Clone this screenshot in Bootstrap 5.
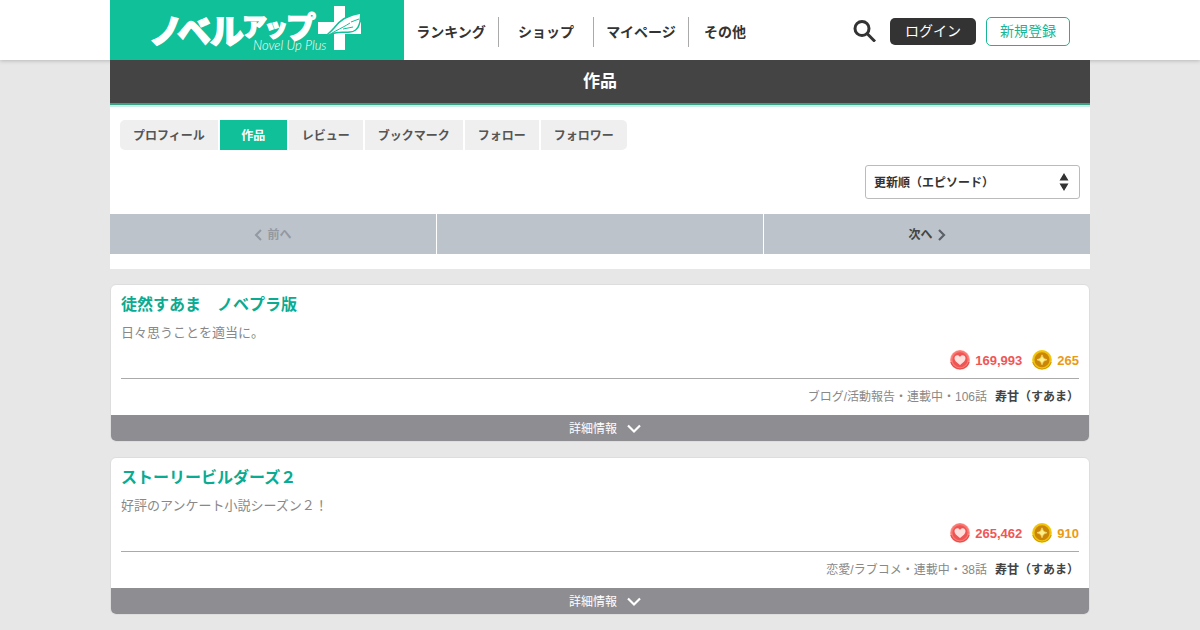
<!DOCTYPE html>
<html lang="ja">
<head>
<meta charset="utf-8">
<meta name="viewport" content="width=device-width, initial-scale=1">
<title>作品 | ノベルアップ＋</title>
<link href="https://cdn.jsdelivr.net/npm/bootstrap@5.3.0/dist/css/bootstrap.min.css" rel="stylesheet">
<style>
:root { --teal: #10c098; --ink: #333; }
body { background: #e7e7e7; color: var(--ink); font-family: "Liberation Sans", "Noto Sans CJK JP", sans-serif; font-size: 12px; line-height: 20px; }
a { text-decoration: none; }
.wrap { max-width: 980px; margin: 0 auto; }
.site-header { box-shadow: 0 1px 4px rgba(0,0,0,.2); }
.brand { flex: 0 0 30%; height: 60px; background: var(--teal); }
.brand svg { width: 294px; max-width: 100%; height: 60px; }
.global-link { width: 95px; line-height: 30px; font-size: 14px; font-weight: 700; color: var(--ink); text-align: center; border-right: 1px solid #aaa; }
.global-link:last-child { width: 72px; border-right: 0; }
.account { padding: 2px 20px 0 0; gap: 10px; }
.btn-login, .btn-join { font-size: 14px; line-height: 27px; padding: 0 13px; border-radius: 5px; }
.btn-login { background: var(--ink); color: #fff; padding: 0 15px; border: 0; }
.btn-join { border: 1px solid #1bb595; color: #1bb595; background: #fff; }
.page-title { background: #444; color: #fff; font-size: 17px; font-weight: 700; line-height: 43px; border-bottom: 2px solid #3ba488; box-shadow: 0 2px 0 #c6f0e5; }
.tabs { gap: 2px; padding: 15px 10px 0; }
.tabs a { background: #efefef; color: #555; font-weight: 700; height: 30px; line-height: 32px; padding: 0 13px; }
.tabs a.active { background: var(--teal); color: #fff; width: 67px; padding: 0; text-align: center; }
.tabs a:first-child { border-radius: 5px 0 0 5px; }
.tabs a:last-child { border-radius: 0 5px 5px 0; }
.sort-box { padding: 15px 10px; }
.sort-box select { width: 215px; height: 34px; padding: 1px 8px 0; font-size: 12px; font-weight: 700; color: var(--ink); border: 1px solid #bbb; border-radius: 3px; background-size: 10px 20px; background-position: right 10px center;
 background-image: url("data:image/svg+xml,%3Csvg xmlns='http://www.w3.org/2000/svg' viewBox='0 0 10 20'%3E%3Cpath d='M.5 8.500 5 1l4.500 7.500ZM.5 11.500h9L5 19Z' fill='%23333'/%3E%3C/svg%3E"); }
.pager { gap: 1px; }
.pager > * { flex: 1; height: 40px; background: #bcc3cb; color: #444; font-weight: 700; gap: 5px; padding-top: 1px; }
.pager .off { color: #9399a1; }
.work { border: 1px solid #ddd; border-radius: 6px; background: #fff; margin: 0 0 15px; overflow: hidden; }
.work-body { padding: 10px 10px 0; }
.work h2 { font-size: 16px; line-height: 20px; font-weight: 700; margin: 0 0 8px; }
.work h2 a { color: #0aab91; }
.work-text { font-size: 13px; color: #888; margin: 0 0 7px; }
.stats { gap: 10px; font-size: 13px; line-height: 22px; font-weight: 700; height: 29px; border-bottom: 1px solid #aaa; }
.stats span { gap: 5px; }
.likes { color: #f05656; }
.coins { color: #eb9a16; }
.work-meta { height: 36px; line-height: 37px; gap: 8px; color: #888; }
.work-meta a { color: #444; font-weight: 700; }
.more { height: 26px; border: 0; background: #8e8d92; color: #fff; gap: 10px; padding: 1px 0 0 10px; }
</style>
</head>
<body>
<svg class="d-none">
  <symbol id="heart" viewBox="0 0 20 20">
    <circle cx="10" cy="10" r="10" fill="#ff9c95"/><path d="M.4 12a10 10 0 0 0 19.2 0Z" fill="#de4848"/><circle cx="10" cy="9.500" r="9" fill="#fa7772"/><circle cx="10" cy="9.800" r="7.500" fill="#ee5656"/>
    <path d="M10 15C6.300 12.300 4.500 10.500 4.500 8.300c0-3.200 4-4 5.500-1.300 1.500-2.700 5.500-1.900 5.500 1.300 0 2.200-1.800 4-5.500 6.700Z" fill="#ffe0dd"/>
  </symbol>
  <symbol id="coin" viewBox="0 0 20 20">
    <circle cx="10" cy="10" r="10" fill="#f5d72c"/><path d="M.4 12a10 10 0 0 0 19.200 0Z" fill="#c88a00"/><circle cx="10" cy="9.500" r="9.200" fill="#f0c20c"/><circle cx="10" cy="9.800" r="7.500" fill="#cc8607"/>
    <path d="M10 4.800q.6 4.400 5 5-4.400.6-5 5Q9.400 10.400 5 9.800 9.400 9.200 10 4.800Z" fill="#fff08a" stroke="#fff08a" stroke-width=".5"/>
  </symbol>
  <symbol id="down" viewBox="0 0 14 10"><path d="m1 1.500 6 6 6-6" fill="none" stroke="#fff" stroke-width="2.200"/></symbol>
</svg>

<header class="site-header bg-white">
  <div class="wrap d-flex align-items-center">
    <a class="brand" href="#" aria-label="ノベルアップ＋">
      <svg viewBox="0 0 294 60" fill="#fff" font-family="'Noto Sans CJK JP', sans-serif" font-weight="900">
        <g stroke="#fff" stroke-width="1.200">
          <text x="39" y="44" font-size="34">ノ</text>
          <text x="67" y="44" font-size="34">ベ</text>
          <text x="100" y="44" font-size="34">ル</text>
          <text x="132" y="36" font-size="25">ア</text>
          <text x="154" y="36" font-size="24">ッ</text>
          <text x="176" y="38" font-size="30">プ</text>
        </g>
        <text x="143" y="50" font-family="Lato, sans-serif" font-size="13" font-weight="300" font-style="italic">Novel Up Plus</text>
        <path d="M224 6h11v16h16v12h-16v16h-11V34h-16V22h16Z"/>
        <path d="M209 43c7-8 11-10 15-15 5-7 14-13 27-15-1 5 0 8-2 12-1 4-5 7-9 7-6 1-12-1-18 2-5 2-9 5-13 9Z" stroke="#10c098" stroke-width="1.500"/>
        <path d="M211 41c10-9 20-12 29-18M241 22l8-3M233 29l10-2" fill="none" stroke="#10c098" stroke-width="1"/>
      </svg>
    </a>
    <nav class="d-flex pt-1">
      <a class="global-link" href="#">ランキング</a>
      <a class="global-link" href="#">ショップ</a>
      <a class="global-link" href="#">マイページ</a>
      <a class="global-link" href="#">その他</a>
    </nav>
    <div class="account d-flex align-items-center ms-auto">
      <a href="#" aria-label="検索" class="d-flex me-1">
        <svg width="23" height="22" viewBox="0 0 23 22" fill="none" stroke="#333" stroke-width="3"><circle cx="9" cy="8.500" r="7"/><path d="m14 13.500 8 8"/></svg>
      </a>
      <button type="button" class="btn btn-login">ログイン</button>
      <button type="button" class="btn btn-join">新規登録</button>
    </div>
  </div>
</header>

<main class="wrap">
  <section class="bg-white" style="margin-bottom:15px;padding-bottom:15px">
    <h1 class="page-title text-center m-0 position-relative">作品</h1>
    <nav class="tabs d-flex flex-wrap">
      <a href="#">プロフィール</a>
      <a href="#" class="active" aria-current="page">作品</a>
      <a href="#">レビュー</a>
      <a href="#">ブックマーク</a>
      <a href="#">フォロー</a>
      <a href="#">フォロワー</a>
    </nav>
    <div class="sort-box d-flex justify-content-end">
      <select class="form-select" aria-label="並び順"><option>更新順（エピソード）</option></select>
    </div>
    <div class="pager d-flex">
      <span class="off d-flex align-items-center justify-content-center">
        <svg width="8" height="12" viewBox="0 0 8 12" fill="none" stroke="currentColor" stroke-width="2"><path d="M7 1 2 6l5 5"/></svg>前へ
      </span>
      <span></span>
      <a href="#" class="d-flex align-items-center justify-content-center">次へ
        <svg width="8" height="12" viewBox="0 0 8 12" fill="none" stroke="#5c6168" stroke-width="2.200"><path d="m1 1 5 5-5 5"/></svg>
      </a>
    </div>
  </section>

  <article class="work">
    <div class="work-body">
      <h2><a href="#">徒然すあま　ノベプラ版</a></h2>
      <p class="work-text">日々思うことを適当に。</p>
      <div class="stats d-flex justify-content-end">
        <span class="likes d-flex"><svg width="20" height="20"><use href="#heart"/></svg>169,993</span>
        <span class="coins d-flex"><svg width="20" height="20"><use href="#coin"/></svg>265</span>
      </div>
      <div class="work-meta d-flex justify-content-end"><span>ブログ/活動報告・連載中・106話</span><a href="#">寿甘（すあま）</a></div>
    </div>
    <button type="button" class="more w-100 d-flex align-items-center justify-content-center">詳細情報<svg width="14" height="10"><use href="#down"/></svg></button>
  </article>

  <article class="work">
    <div class="work-body">
      <h2><a href="#">ストーリービルダーズ２</a></h2>
      <p class="work-text">好評のアンケート小説シーズン２！</p>
      <div class="stats d-flex justify-content-end">
        <span class="likes d-flex"><svg width="20" height="20"><use href="#heart"/></svg>265,462</span>
        <span class="coins d-flex"><svg width="20" height="20"><use href="#coin"/></svg>910</span>
      </div>
      <div class="work-meta d-flex justify-content-end"><span>恋愛/ラブコメ・連載中・38話</span><a href="#">寿甘（すあま）</a></div>
    </div>
    <button type="button" class="more w-100 d-flex align-items-center justify-content-center">詳細情報<svg width="14" height="10"><use href="#down"/></svg></button>
  </article>
</main>
<script src="https://cdn.jsdelivr.net/npm/bootstrap@5.3.0/dist/js/bootstrap.bundle.min.js"></script>
</body>
</html>
